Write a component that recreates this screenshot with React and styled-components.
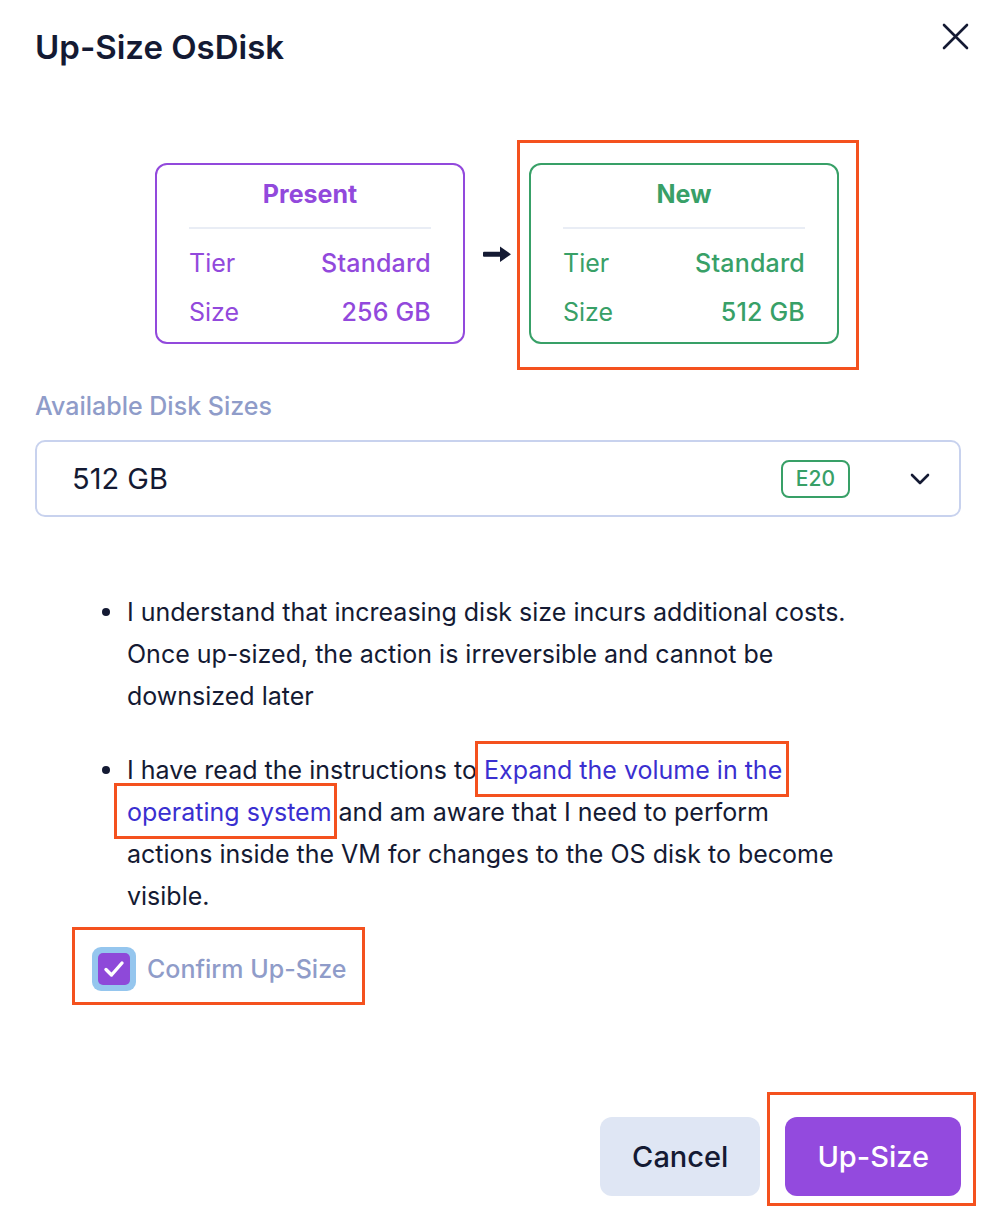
import React from "react"
import styled, { createGlobalStyle } from "styled-components"

const GlobalStyle = createGlobalStyle`
  html, body {
    margin: 0;
    padding: 0;
    background: #ffffff;
  }
  body {
    font-family: "Inter", "Noto Sans", sans-serif;
    color: #141a33;
  }
`

const purple = "#9249dc"
const green = "#38a067"
const muted = "#8f9cc9"
const mark = "#f4511e"

const Dialog = styled.div`
  width: 1006px;
  height: 1216px;
  box-sizing: border-box;
  padding: 28px 45px 20px 35px;
  display: flex;
  flex-direction: column;
`

const Header = styled.div`
  display: flex;
  justify-content: space-between;
  align-items: center;
  margin-right: -8px;
`

const Title = styled.h1`
  margin: 0;
  font-size: 33px;
  line-height: 38px;
  font-weight: 600;
  color: #141a33;
`

const CloseButton = styled.button`
  border: none;
  background: none;
  padding: 0;
  width: 28px;
  height: 28px;
  margin-top: -23px;
  cursor: pointer;
  display: flex;
  align-items: center;
  justify-content: center;
`

const Compare = styled.div`
  display: flex;
  align-items: center;
  justify-content: center;
  gap: 18px;
  margin-top: 97px;
  padding-right: 2px;
`

const Highlighted = styled.div`
  position: relative;
  display: ${(p) => (p.$inline ? "inline-block" : "block")};

  &::after {
    content: "";
    position: absolute;
    top: ${(p) => p.$t}px;
    right: ${(p) => p.$r}px;
    bottom: ${(p) => p.$b}px;
    left: ${(p) => p.$l}px;
    border: 3px solid ${mark};
    pointer-events: none;
  }
`

const Card = styled.div`
  width: 310px;
  box-sizing: border-box;
  border: 2px solid ${(p) => p.$color};
  border-radius: 12px;
  padding: 14px 32px 15px;
  color: ${(p) => p.$color};
`

const CardTitle = styled.div`
  text-align: center;
  font-size: 25px;
  line-height: 30px;
  font-weight: 700;
`

const Divider = styled.div`
  height: 2px;
  background: #e9edf5;
  margin: 18px 0 19px;
`

const CardRows = styled.div`
  display: flex;
  flex-direction: column;
  gap: 19px;
`

const CardRow = styled.div`
  display: flex;
  justify-content: space-between;
  font-size: 25px;
  line-height: 30px;
`

const RowValue = styled.span`
  font-weight: 500;
  letter-spacing: 0.2px;
`

const Label = styled.div`
  margin-top: 47px;
  font-size: 25px;
  line-height: 30px;
  color: ${muted};
  font-weight: 500;
`

const Select = styled.div`
  margin-top: 19px;
  height: 77px;
  box-sizing: border-box;
  border: 2px solid #c8d2ee;
  border-radius: 10px;
  display: flex;
  align-items: center;
  padding: 0 29px 0 35px;
`

const SelectValue = styled.span`
  flex: 1;
  font-size: 29px;
  color: #141a33;
`

const Badge = styled.span`
  border: 2px solid ${green};
  color: ${green};
  border-radius: 8px;
  font-size: 21px;
  font-weight: 500;
  line-height: 34px;
  padding: 0 13px;
  margin-right: 60px;
`

const Notes = styled.ul`
  list-style: none;
  margin: 74px 0 0;
  padding: 0 0 0 67px;
  display: flex;
  flex-direction: column;
  gap: 32px;
`

const Note = styled.li`
  display: flex;
  gap: 17px;
  font-size: 25px;
  line-height: 42px;
`

const Dot = styled.span`
  flex: none;
  width: 8px;
  height: 8px;
  border-radius: 50%;
  background: #141a33;
  margin-top: 17px;
`

const NoteText = styled.span`
  width: 752px;
`

const Link = styled.a`
  color: #3a2fd0;
  text-decoration: none;
  white-space: nowrap;
`

const Confirm = styled.label`
  display: flex;
  align-items: center;
  gap: 11px;
  font-size: 25px;
  color: ${muted};
  font-weight: 500;
`

const ConfirmSlot = styled.div`
  margin: 30px 0 0 57px;
`

const CheckOuter = styled.span`
  width: 44px;
  height: 44px;
  border-radius: 9px;
  background: #95c6ee;
  display: flex;
  align-items: center;
  justify-content: center;
`

const CheckInner = styled.span`
  width: 32px;
  height: 32px;
  border-radius: 5px;
  background: #8e49d9;
  display: flex;
  align-items: center;
  justify-content: center;
`

const Actions = styled.div`
  margin-top: auto;
  display: flex;
  justify-content: flex-end;
  gap: 25px;
`

const Button = styled.button`
  border: none;
  border-radius: 12px;
  height: 79px;
  padding: 0 32px;
  font-family: inherit;
  font-size: 29px;
  font-weight: 500;
  cursor: pointer;
  background: ${(p) => (p.$primary ? "#934ade" : "#dfe6f4")};
  color: ${(p) => (p.$primary ? "#ffffff" : "#141a33")};
`

const DiskCard = ({ title, color, tier, size }) => (
  <Card $color={color}>
    <CardTitle>{title}</CardTitle>
    <Divider />
    <CardRows>
      <CardRow>
        <span>Tier</span>
        <RowValue>{tier}</RowValue>
      </CardRow>
      <CardRow>
        <span>Size</span>
        <RowValue>{size}</RowValue>
      </CardRow>
    </CardRows>
  </Card>
)

const App = () => {
  return (
    <>
      <GlobalStyle />
      <Dialog>
        <Header>
          <Title>Up-Size OsDisk</Title>
          <CloseButton aria-label="Close">
            <svg width="28" height="28" viewBox="0 0 28 28" fill="none">
              <path
                d="M3 3L26 26M26 3L3 26"
                stroke="#141a33"
                strokeWidth="2.6"
                strokeLinecap="round"
              />
            </svg>
          </CloseButton>
        </Header>

        <Compare>
          <DiskCard title="Present" color={purple} tier="Standard" size="256 GB" />
          <svg width="28" height="18" viewBox="0 0 28 18">
            <rect x="0" y="6.8" width="19" height="5" rx="1" fill="#141a33" />
            <path d="M17 1.5L28 9.3L17 17Z" fill="#141a33" />
          </svg>
          <Highlighted $t={-23} $r={-20} $b={-26} $l={-12}>
            <DiskCard title="New" color={green} tier="Standard" size="512 GB" />
          </Highlighted>
        </Compare>

        <Label>Available Disk Sizes</Label>
        <Select>
          <SelectValue>512 GB</SelectValue>
          <Badge>E20</Badge>
          <svg width="20" height="12" viewBox="0 0 20 12" fill="none">
            <path
              d="M2 2L10 10L18 2"
              stroke="#141a33"
              strokeWidth="2.6"
              strokeLinecap="round"
              strokeLinejoin="round"
            />
          </svg>
        </Select>

        <Notes>
          <Note>
            <Dot />
            <NoteText>
              I understand that increasing disk size incurs additional costs.
              Once up-sized, the action is irreversible and cannot be downsized
              later
            </NoteText>
          </Note>
          <Note>
            <Dot />
            <NoteText>
              I have read the instructions to{" "}
              <Highlighted as="span" $inline $t={-8} $r={-7} $b={-6} $l={-9}>
                <Link href="#">Expand the volume in the</Link>
              </Highlighted>{" "}
              <Highlighted as="span" $inline $t={-8} $r={-5} $b={-6} $l={-13}>
                <Link href="#">operating system</Link>
              </Highlighted>{" "}
              and am aware that I need to perform
              <br />
              actions inside the VM for changes to the OS disk to become
              visible.
            </NoteText>
          </Note>
        </Notes>

        <ConfirmSlot>
          <Highlighted $inline $t={-20} $r={-19} $b={-14} $l={-20}>
            <Confirm>
              <CheckOuter>
                <CheckInner>
                  <svg width="22" height="18" viewBox="0 0 22 18" fill="none">
                    <path
                      d="M3 9.5L8.5 15L19 3"
                      stroke="#ffffff"
                      strokeWidth="3.4"
                      strokeLinecap="round"
                      strokeLinejoin="round"
                    />
                  </svg>
                </CheckInner>
              </CheckOuter>
              Confirm Up-Size
            </Confirm>
          </Highlighted>
        </ConfirmSlot>

        <Actions>
          <Button>Cancel</Button>
          <Highlighted $t={-25} $r={-15} $b={-10} $l={-18}>
            <Button $primary>Up-Size</Button>
          </Highlighted>
        </Actions>
      </Dialog>
    </>
  )
}

export default App
